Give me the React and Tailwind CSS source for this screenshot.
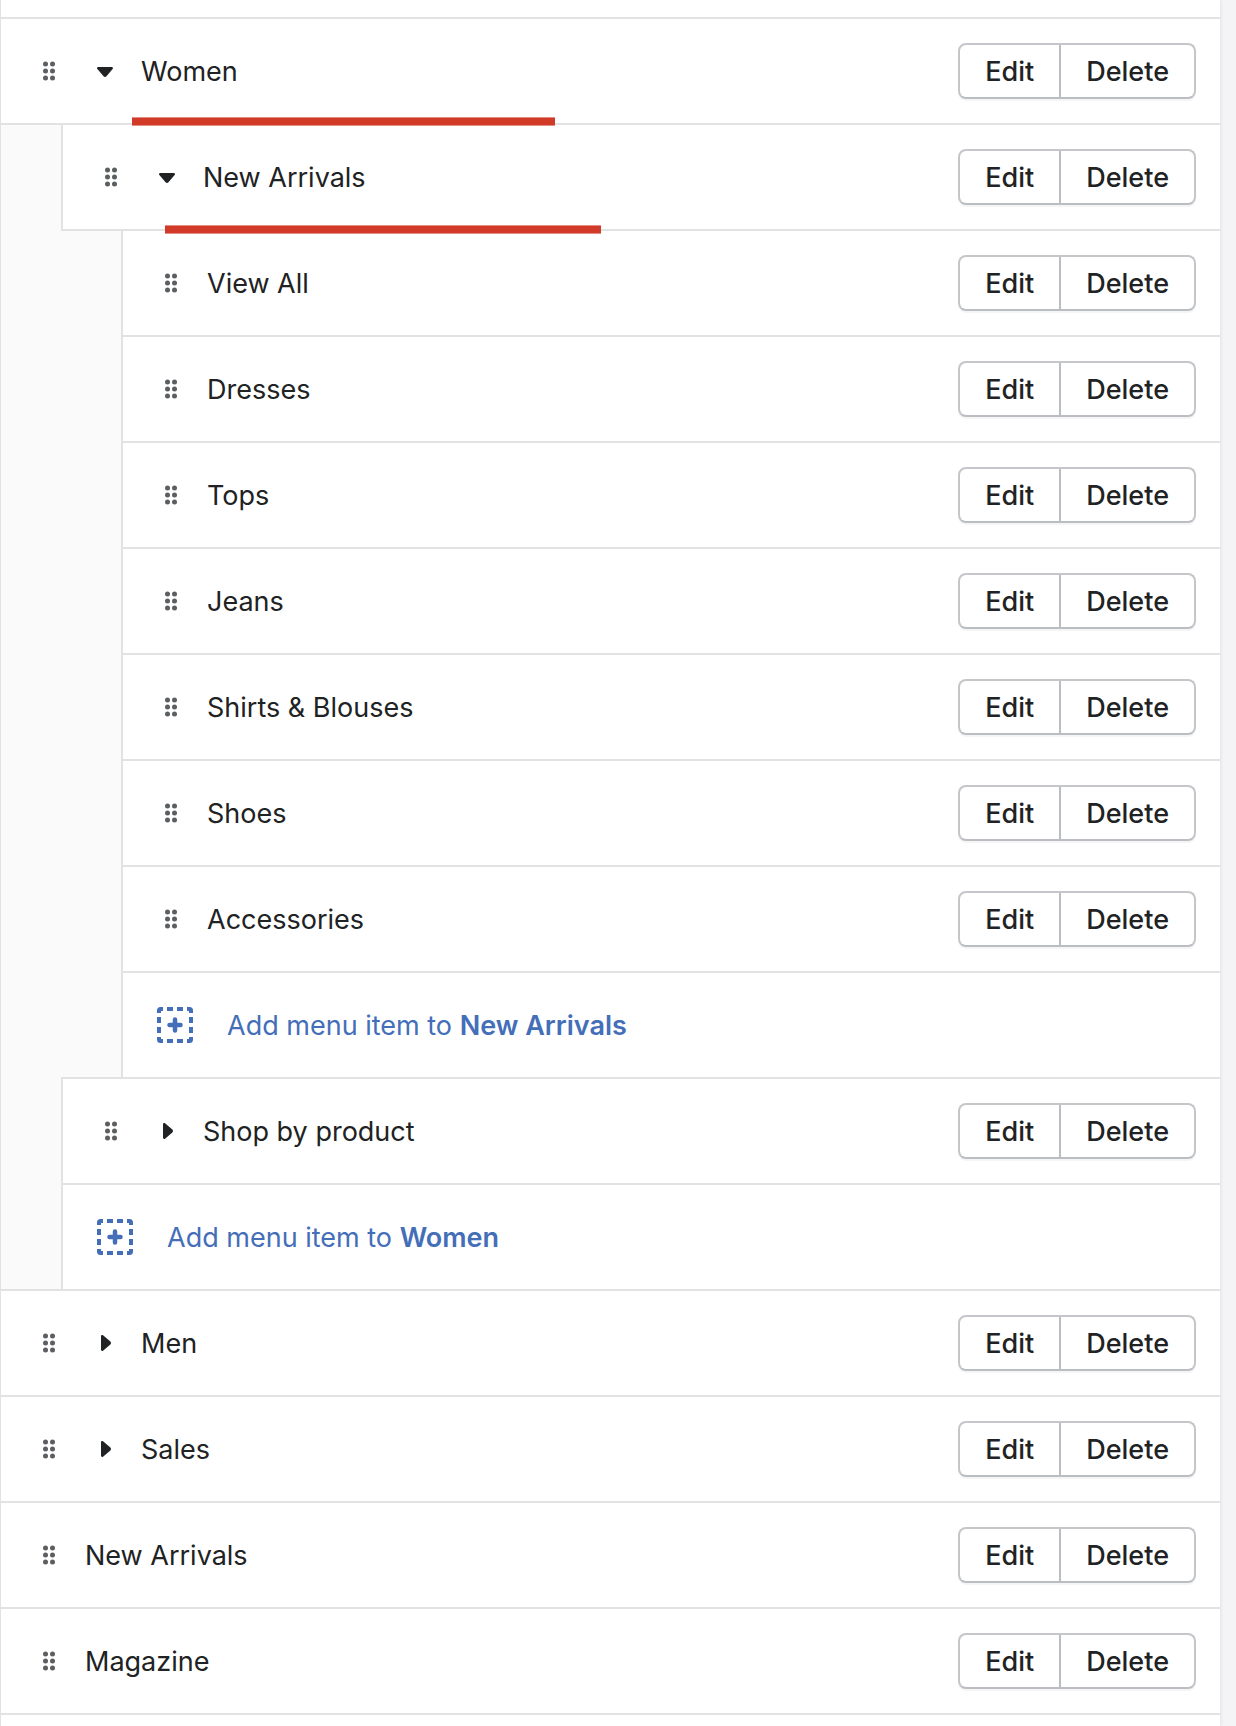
import { useState } from 'react';
import clsx from 'clsx';

const MENU = [
  {
    id: 'women',
    title: 'Women',
    marker: 'left-[131px] -bottom-[3px] w-[423px]',
    items: [
      {
        id: 'women-new',
        title: 'New Arrivals',
        marker: 'left-[102px] -bottom-[5px] w-[436px]',
        items: [
          { id: 'view-all', title: 'View All' },
          { id: 'dresses', title: 'Dresses' },
          { id: 'tops', title: 'Tops' },
          { id: 'jeans', title: 'Jeans' },
          { id: 'shirts', title: 'Shirts & Blouses' },
          { id: 'shoes', title: 'Shoes' },
          { id: 'accessories', title: 'Accessories' },
        ],
      },
      { id: 'by-product', title: 'Shop by product', items: [] },
    ],
  },
  { id: 'men', title: 'Men', items: [] },
  { id: 'sales', title: 'Sales', items: [] },
  { id: 'new', title: 'New Arrivals' },
  { id: 'magazine', title: 'Magazine' },
];

const DragHandle = () => (
  <svg width="12" height="20" viewBox="0 0 12 20" fill="#5c5f62" className="shrink-0" aria-hidden="true">
    {[3, 10, 17].map((y) => (
      <g key={y}>
        <circle cx="2.5" cy={y} r="2.5" />
        <circle cx="9.5" cy={y} r="2.5" />
      </g>
    ))}
  </svg>
);

const Caret = ({ open }) => (
  <svg width="40" height="40" viewBox="0 0 20 20" fill="#202223" aria-hidden="true">
    {open ? (
      <path d="M6.6 8h6.8c.55 0 .8.62.42 1.02l-3.1 3.66c-.4.43-1.04.43-1.44 0l-3.1-3.66C5.8 8.62 6.05 8 6.6 8z" />
    ) : (
      <path d="M8 6.6v6.8c0 .55.62.8 1.02.42l3.66-3.1c.43-.4.43-1.04 0-1.44l-3.66-3.1C8.62 5.8 8 6.05 8 6.6z" />
    )}
  </svg>
);

const AddIcon = () => (
  <svg width="36" height="36" viewBox="0 0 36 36" fill="none" stroke="#446eb8" strokeWidth="4" className="shrink-0" aria-hidden="true">
    <path d="M2 6V3.5Q2 2 3.5 2H6M30 2h2.5Q34 2 34 3.5V6M34 30v2.5q0 1.5-1.5 1.5H30M6 34H3.5Q2 34 2 32.5V30" />
    <path d="M10 2h6M20 2h6M10 34h6M20 34h6M2 10v6M2 20v6M34 10v6M34 20v6" />
    <path d="M18 12.5v11M12.5 18h11" strokeLinecap="round" strokeWidth="4.5" />
  </svg>
);

const RowActions = ({ title }) => (
  <div className="ml-auto flex h-14 shrink-0 rounded-lg border-2 border-[#c4c6c9] border-b-[#babdc1] bg-white font-medium shadow-[0_2px_0_rgba(0,0,0,0.04)]">
    <button type="button" aria-label={`Edit ${title}`} className="border-r-2 border-[#babdc1] px-[25px] pt-0.5">
      Edit
    </button>
    <button type="button" aria-label={`Delete ${title}`} className="px-[25px] pt-0.5">
      Delete
    </button>
  </div>
);

const AddRow = ({ parent }) => (
  <li className="border-t-2 border-[#e1e2e4]">
    <div className="flex h-26 items-center border-l-2 border-[#e1e2e4] bg-white pl-[34px]">
      <button type="button" className="flex items-center gap-[34px] text-[#446eb8]">
        <AddIcon />
        <span className="pt-0.5">
          Add menu item to <strong className="font-semibold">{parent}</strong>
        </span>
      </button>
    </div>
  </li>
);

const MenuItem = ({ item, nested }) => {
  const [open, setOpen] = useState(item.items?.length > 0);

  return (
    <li className="border-t-2 border-[#e1e2e4] first:border-t-0">
      <div
        className={clsx(
          'relative flex h-26 items-center bg-white pr-6 pl-[42px]',
          nested && 'border-l-2 border-[#e1e2e4]'
        )}
      >
        <DragHandle />
        {item.items ? (
          <button
            type="button"
            aria-label={`Toggle ${item.title}`}
            aria-expanded={open}
            onClick={() => setOpen(!open)}
            className="ml-[30px] mr-4"
          >
            <Caret open={open} />
          </button>
        ) : (
          <span className="w-[30px]" />
        )}
        <span className="pt-0.5">{item.title}</span>
        <RowActions title={item.title} />
        {item.marker && (
          <span className={clsx('absolute z-10 h-[9px] border-y border-[#e68e84] bg-[#d03a27]', item.marker)} />
        )}
      </div>

      {open && (
        <ul className="border-t-2 border-[#e1e2e4] bg-[#fafafb] pl-[60px]">
          {item.items.map((child) => (
            <MenuItem key={child.id} item={child} nested />
          ))}
          <AddRow parent={item.title} />
        </ul>
      )}
    </li>
  );
};

const App = () => (
  <div className="min-h-screen bg-[#f4f4f7] pr-4 font-[Inter,sans-serif] text-[27px] leading-[42px] text-[#202223]">
    <main className="min-h-screen border-l border-[#e1e2e4] bg-white pt-[17px] shadow-[0_0_4px_rgba(23,24,24,0.12)]">
      <ul className="border-y-2 border-[#e1e2e4]">
        {MENU.map((item) => (
          <MenuItem key={item.id} item={item} />
        ))}
      </ul>
    </main>
  </div>
);

export default App;
